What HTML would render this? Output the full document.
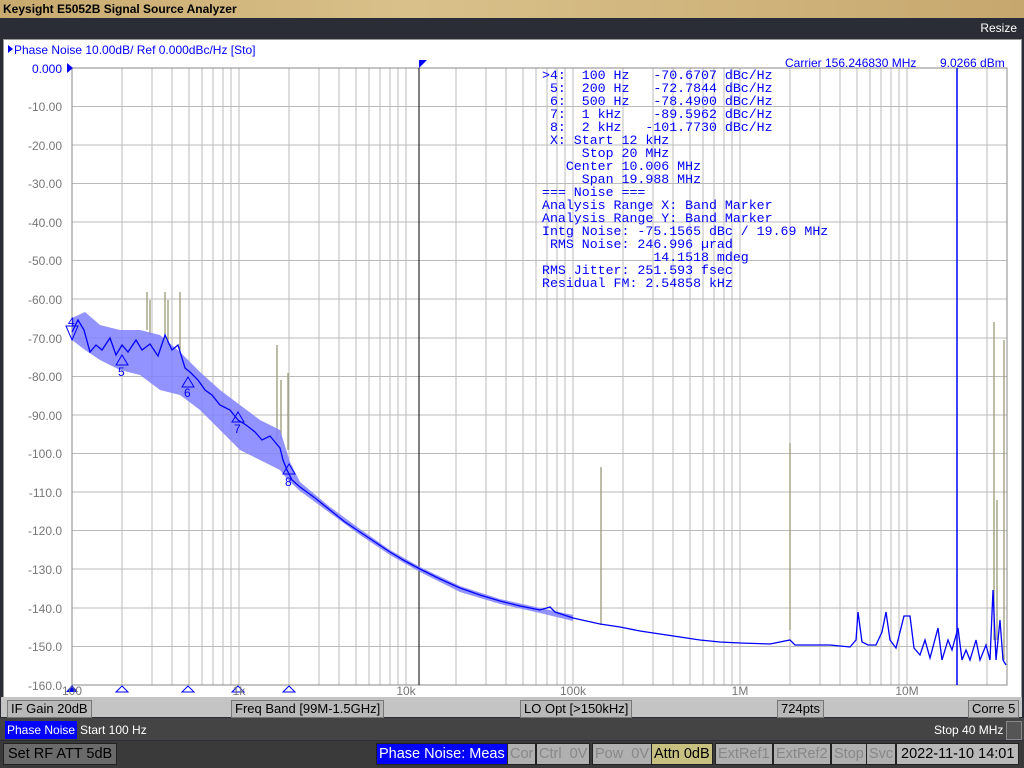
<!DOCTYPE html>
<html><head><meta charset="utf-8"><style>
body{margin:0;width:1024px;height:768px;overflow:hidden;background:#2a2d35;font-family:"Liberation Sans",sans-serif;position:relative}
.a{position:absolute;white-space:pre}
.mono{font-family:"Liberation Mono",monospace;font-size:13.25px;color:#0000ff;line-height:13px}
.btn{position:absolute;top:700px;height:16px;background:#b8b8b8;border:1px solid #777;font-size:13px;line-height:16px;padding:0 3px;color:#000}
.sk{position:absolute;top:743px;height:20px;border:1px solid #222;font-size:14.5px;line-height:20px;padding:0 2px;color:#888;background:#b0b0b0}
</style></head><body>
<div class="a" style="left:0;top:0;width:1024px;height:18px;background:linear-gradient(90deg,#c8aa6e,#d9c08a 40%,#c6a86e);font-weight:bold;font-size:12px;line-height:18px;color:#000;padding-left:3px">Keysight E5052B Signal Source Analyzer</div>
<div class="a" style="right:7px;top:21px;color:#fff;font-size:12px">Resize</div>
<div class="a" style="left:3px;top:39px;width:1017px;height:657px;background:#fff;border:1px solid #999"></div>
<div class="a" style="left:1px;top:697px;width:1021px;height:20px;background:#c4c4c4"></div>
<div class="btn" style="left:7px">IF Gain 20dB</div>
<div class="btn" style="left:231px">Freq Band [99M-1.5GHz]</div>
<div class="btn" style="left:520px">LO Opt [&gt;150kHz]</div>
<div class="btn" style="left:777px">724pts</div>
<div class="btn" style="left:968px">Corre 5</div>
<div class="a" style="left:0;top:718px;width:1024px;height:22px;background:#444"></div>
<div class="a" style="left:5px;top:721px;height:18px;background:#0000ff;color:#fff;font-size:12px;line-height:18px;padding:0 2px">Phase Noise</div>
<div class="a" style="left:80px;top:721px;color:#fff;font-size:12px;line-height:18px">Start 100 Hz</div>
<div class="a" style="left:934px;top:721px;color:#fff;font-size:12px;line-height:18px">Stop 40 MHz</div>
<div class="a" style="left:1006px;top:721px;width:14px;height:17px;background:#555;border:1px solid #888"></div>
<div class="a" style="left:0;top:741px;width:1024px;height:27px;background:#3a3a3a"></div>
<div class="sk" style="left:3px;color:#000;background:#6a6a6a;padding:0 4px">Set RF ATT 5dB</div>
<div class="sk" style="left:376px;background:#0000ff;color:#fff">Phase Noise: Meas</div>
<div class="sk" style="left:507px">Cor</div>
<div class="sk" style="left:536px">Ctrl&nbsp;&nbsp;0V</div>
<div class="sk" style="left:592px">Pow&nbsp;&nbsp;0V</div>
<div class="sk" style="left:651px;background:#c8c080;color:#000">Attn 0dB</div>
<div class="sk" style="left:715px">ExtRef1</div>
<div class="sk" style="left:773px">ExtRef2</div>
<div class="sk" style="left:831px">Stop</div>
<div class="sk" style="left:866px">Svc</div>
<div class="sk" style="left:896px;color:#000;background:#b8b8b8;padding:0 4px">2022-11-10 14:01</div>

<svg class="a" style="left:0;top:0" width="1024" height="700">
<g stroke="#bbb" stroke-width="1" fill="none">
<path d="M122 68V685M152 68V685M172 68V685M189 68V685M202 68V685M213 68V685M223 68V685M231 68V685M239 68V685M289 68V685M319 68V685M339 68V685M356 68V685M369 68V685M380 68V685M390 68V685M398 68V685M406 68V685M456 68V685M486 68V685M506 68V685M523 68V685M536 68V685M547 68V685M557 68V685M565 68V685M573 68V685M623 68V685M653 68V685M673 68V685M690 68V685M703 68V685M714 68V685M724 68V685M732 68V685M740 68V685M790 68V685M820 68V685M840 68V685M857 68V685M870 68V685M881 68V685M891 68V685M899 68V685M907 68V685M957 68V685M987 68V685"/>
<path d="M72 106.5H1007M72 145H1007M72 183.5H1007M72 222H1007M72 260.5H1007M72 299H1007M72 338H1007M72 376.5H1007M72 415H1007M72 453.5H1007M72 492H1007M72 530.5H1007M72 569H1007M72 608H1007M72 646.5H1007"/>
</g>
<rect x="72" y="68" width="935" height="617" fill="none" stroke="#888"/>
<path d="M419 68V685" stroke="#000" stroke-width="1"/>
<path d="M419 60h8l-8 8z" fill="#00f"/>
<path d="M957 68V685" stroke="#00f" stroke-width="1.5"/>
<g stroke="#9a9a78" stroke-width="1.3" fill="none">
<path d="M147 330V292M150 335V300M165 340V292M168 345V300M180 350V292M277 440V345M281 440V380M288 450V373M601 625V467M790 630V443M994 640V322M1004 660V340M997 640V500"/>
</g>
<polygon fill="#8080ff" opacity=".85" points="72,318 85,312 100,325 120,330 140,330 160,335 180,352 200,372 220,390 240,405 260,420 280,430 290,462 300,482 330,507 360,529 390,550 420,567 460,586 500,599 540,608 573,615 573,621 540,613 500,604 460,592 420,572 390,555 360,535 330,513 300,491 288,480 280,470 260,460 240,450 220,430 200,410 180,395 160,390 140,375 120,370 100,360 85,350 72,340"/>
<polyline fill="none" stroke="#0000ff" stroke-width="1.3" points="72,332 78,320 84,330 90,352 96,345 102,350 110,338 116,355 122,345 128,352 136,340 142,350 150,344 158,356 165,335 172,350 178,345 185,368 190,372 198,380 205,390 212,395 220,405 230,410 238,420 246,425 255,432 262,440 270,436 280,448 283,460 287,470 292,480 300,487 315,498 330,510 345,522 360,532 375,542 390,552 405,561 420,569 440,579 460,588 480,595 500,601 520,606 540,610 550,607 555,612 573,618 600,624 620,627 640,631 660,634 680,637 700,640 720,642 740,643 770,644 790,640 795,645 830,645 850,647 856,640 858,612 862,642 868,645 876,645 882,632 886,612 890,640 896,648 904,616 910,616 914,648 920,655 925,640 930,658 938,628 942,660 948,640 952,650 958,628 962,660 966,650 970,660 976,640 980,660 986,645 990,660 993,590 996,660 1000,620 1003,660 1006,665"/>
<g font-family="Liberation Sans" font-size="12" fill="#00f">
<text x="68" y="326">4</text><text x="118" y="376">5</text><text x="184" y="397">6</text><text x="234" y="433">7</text><text x="285" y="486">8</text>
</g>
<g fill="none" stroke="#00f"><path d="M116 365l6-10 6 10zM182 387l6-10 6 10zM232 422l6-10 6 10zM283 474l6-10 6 10z"/></g>
<path d="M66 326l6 14 6-14z" fill="none" stroke="#00f"/>
<path d="M66 692l6-7 6 7z" fill="#00f"/>
<g fill="none" stroke="#00f"><path d="M116 692l6-6 6 6zM182 692l6-6 6 6zM232 692l6-6 6 6zM283 692l6-6 6 6z"/></g>
<path d="M67 63l6 5-6 5z" fill="#00f"/>
<path d="M8 45l5 4-5 4z" fill="#00f"/>
<text x="14" y="54" font-size="12" fill="#00f">Phase Noise 10.00dB/ Ref 0.000dBc/Hz [Sto]</text>
<text x="785" y="67" font-size="12" fill="#00f">Carrier 156.246830 MHz</text>
<text x="940" y="67" font-size="12" fill="#00f">9.0266 dBm</text>
<g font-size="12" fill="#777" text-anchor="end">
<text x="62" y="73" fill="#00f">0.000</text><text x="62" y="111">-10.00</text><text x="62" y="150">-20.00</text><text x="62" y="188">-30.00</text><text x="62" y="227">-40.00</text><text x="62" y="265">-50.00</text><text x="62" y="304">-60.00</text><text x="62" y="343">-70.00</text><text x="62" y="381">-80.00</text><text x="62" y="420">-90.00</text><text x="62" y="458">-100.0</text><text x="62" y="497">-110.0</text><text x="62" y="535">-120.0</text><text x="62" y="574">-130.0</text><text x="62" y="613">-140.0</text><text x="62" y="651">-150.0</text><text x="62" y="690">-160.0</text>
</g>
<g font-size="12" fill="#777" text-anchor="middle">
<text x="72" y="695">100</text><text x="239" y="695">1k</text><text x="406" y="695">10k</text><text x="573" y="695">100k</text><text x="740" y="695">1M</text><text x="907" y="695">10M</text>
</g>
</svg>
<div class="a mono" style="left:542px;top:69px">&gt;4:  100 Hz   -70.6707 dBc/Hz
 5:  200 Hz   -72.7844 dBc/Hz
 6:  500 Hz   -78.4900 dBc/Hz
 7:  1 kHz    -89.5962 dBc/Hz
 8:  2 kHz   -101.7730 dBc/Hz
 X: Start 12 kHz
     Stop 20 MHz
   Center 10.006 MHz
     Span 19.988 MHz
=== Noise ===
Analysis Range X: Band Marker
Analysis Range Y: Band Marker
Intg Noise: -75.1565 dBc / 19.69 MHz
 RMS Noise: 246.996 µrad
              14.1518 mdeg
RMS Jitter: 251.593 fsec
Residual FM: 2.54858 kHz</div>
</body></html>
